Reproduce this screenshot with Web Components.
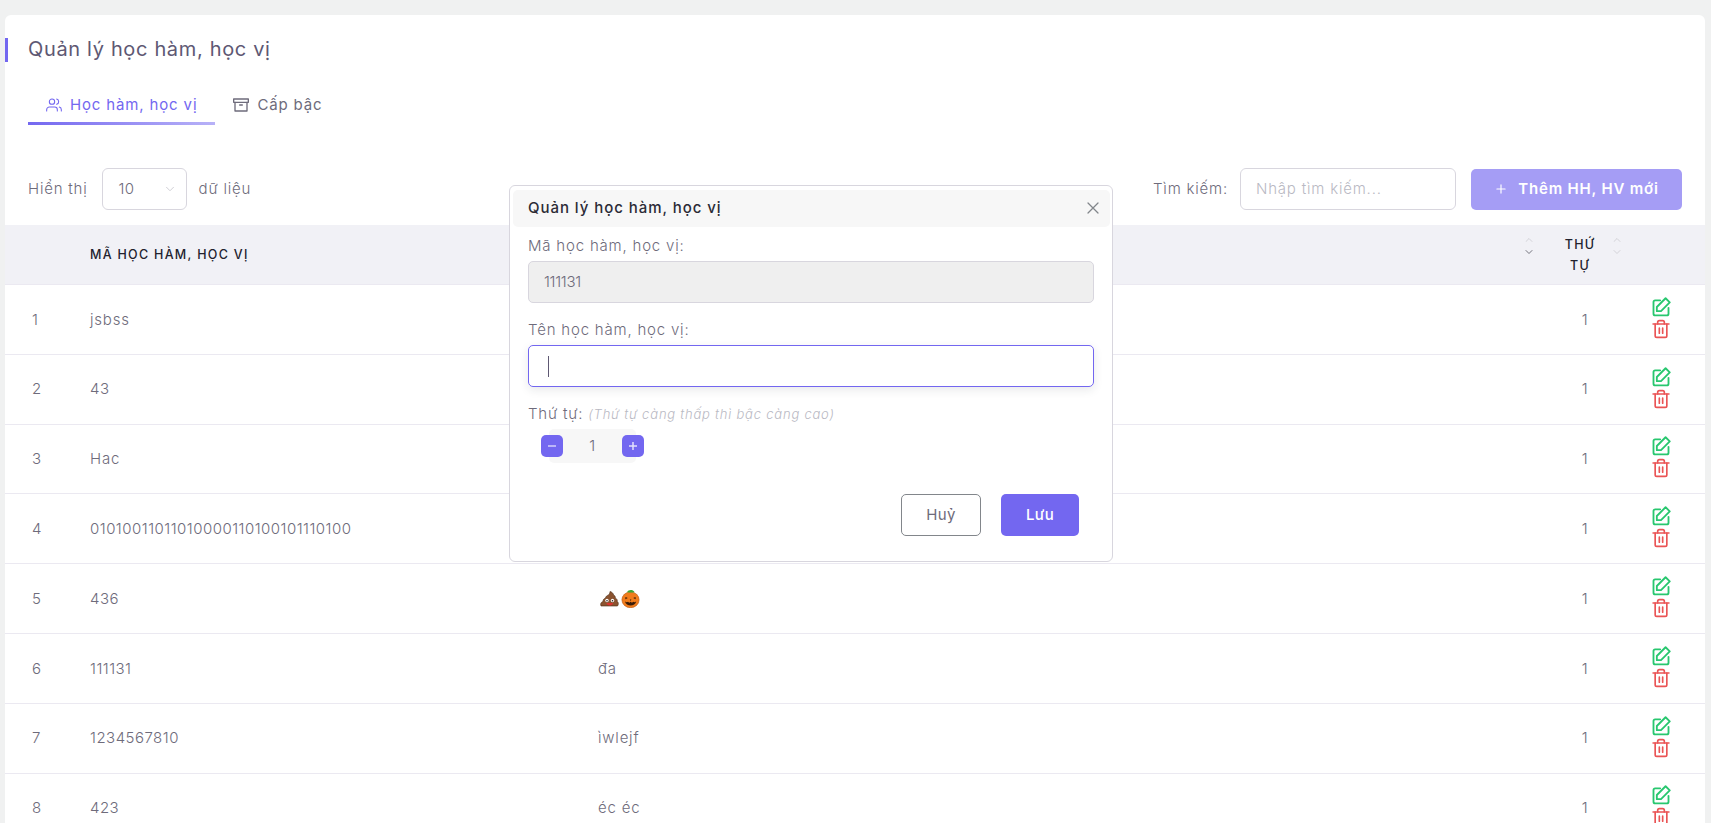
<!DOCTYPE html>
<html lang="vi">
<head>
<meta charset="utf-8">
<title>Quản lý học hàm, học vị</title>
<style>
  html, body { margin: 0; height: 100%; }
  body {
    background: #f0f1f1;
    color: #6e6b7b;
    font: 300 15px/1.45 Inter, "Noto Sans", sans-serif;
    letter-spacing: .8px;
    overflow: hidden;
  }
</style>
</head>
<body>
<degree-page>
  <degree-dialog slot="dialog"></degree-dialog>
</degree-page>

<script>
const icons = {
  users: '<path d="M17 21v-2a4 4 0 0 0-4-4H5a4 4 0 0 0-4 4v2"/><circle cx="9" cy="7" r="4"/><path d="M23 21v-2a4 4 0 0 0-3-3.87"/><path d="M16 3.13a4 4 0 0 1 0 7.75"/>',
  archive: '<path d="M21 8v13H3V8"/><path d="M1 3h22v5H1z"/><path d="M10 12h4"/>',
  plus: '<path d="M12 5v14M5 12h14"/>',
  x: '<path d="M18 6 6 18M6 6l12 12"/>',
  chevron: '<path d="m6 9 6 6 6-6"/>',
  edit: '<path d="M11 4H5a2 2 0 0 0-2 2v14a2 2 0 0 0 2 2h14a2 2 0 0 0 2-2v-7"/><path d="m17.500 1.500 5 5L12 17H7v-5z"/>',
  trash: '<path d="M2.500 6h19"/><path d="M8 6V4a2 2 0 0 1 2-2h4a2 2 0 0 1 2 2v2"/><path d="M19 6v14a2 2 0 0 1-2 2H7a2 2 0 0 1-2-2V6"/><path d="M10 11v6M14 11v6"/>'
}

const svg = (name, size, color, width = 2) =>
  `<svg width="${size}" height="${size}" viewBox="0 0 24 24" fill="none" stroke="${color}" stroke-width="${width}" stroke-linecap="round" stroke-linejoin="round" style="display:block;flex:none">${icons[name]}</svg>`

const emoji = `
  <svg width="42" height="19" viewBox="0 0 42 19" style="display:block;margin-left:2px">
    <path d="M1 17c-1-2 0-4 2-4.500 0-2 1-3 2.500-3.200C5.500 7.500 7 6.500 8.500 6c1-1 1.500-2.500 1.500-3.500 2 .5 3.500 2 3.500 3.500 1.500.5 2 2 1.800 3.200 1.500.3 2.200 1.800 2 3.300 1.200.7 1.500 3 .2 4.500z" fill="#8a5330" stroke="#4a2a14" stroke-width=".6"/>
    <circle cx="7" cy="11.500" r="1.700" fill="#fff"/><circle cx="12.500" cy="11.500" r="1.700" fill="#fff"/>
    <circle cx="7" cy="11.700" r=".8" fill="#222"/><circle cx="12.500" cy="11.700" r=".8" fill="#222"/>
    <path d="M6.500 14h6.500c0 1.500-1.500 2.500-3.200 2.500S6.500 15.500 6.500 14z" fill="#d9322e"/>
    <ellipse cx="30.500" cy="10.800" rx="8.600" ry="7.900" fill="#f07c1c" stroke="#b9560e" stroke-width=".6"/>
    <path d="M27 3.200c1-2 3-2.500 5.500-2 1 .5 1.500 1 2 2-2 .5-5 .5-7.500 0z" fill="#3fa535"/>
    <path d="m25.500 8 2.300 1-2.500 1.200zM35.500 8l-2.300 1 2.500 1.200zM29.800 10.500h1.600l-.8 1.500z" fill="#3a1c08"/>
    <path d="M25 12.500c1.500 1 2.200 1 3 .3l1.300 1 1.300-1 1.400 1 1.200-1c1 .7 1.500.7 3-.3-.5 2.800-3 4-5.600 4s-5.100-1.200-5.600-4z" fill="#3a1c08"/>
  </svg>`

const rows = [
  ['1', 'jsbss', '', '1'],
  ['2', '43', '', '1'],
  ['3', 'Hac', '', '1'],
  ['4', '01010011011010000110100101110100', '', '1'],
  ['5', '436', emoji, '1'],
  ['6', '111131', 'đa', '1'],
  ['7', '1234567810', 'ìwlejf', '1'],
  ['8', '423', 'éc éc', '1']
]

class SortIcon extends HTMLElement {
  constructor() {
    super()
    const down = this.getAttribute('color') || '#c9c8cf'
    this.attachShadow({ mode: 'open' }).innerHTML = `
      <style>
        :host { display: block; width: 12px; flex: none; margin-top: -17px; }
        .up { transform: rotate(180deg); margin-bottom: 0; }
      </style>
      <div class="up">${svg('chevron', 12, '#c9c8cf', 1.5)}</div>
      <div>${svg('chevron', 12, down, 1.5)}</div>`
  }
}
customElements.define('sort-icon', SortIcon)

const tableColumns = 'grid-template-columns: 85px 508px 1fr 110px 65px;'

class DataTable extends HTMLElement {
  constructor() {
    super()
    const body = rows.map(r => `
      <div class="row">
        <div class="cell idx num">${r[0]}</div>
        <div class="cell ${/^\d+$/.test(r[1]) ? 'num' : ''}">${r[1]}</div>
        <div class="cell">${r[2]}</div>
        <div class="cell center num">${r[3]}</div>
        <div class="cell actions">${svg('edit', 20, '#28c76f', 2.2)}${svg('trash', 20, '#ea5455', 2)}</div>
      </div>`).join('')
    this.attachShadow({ mode: 'open' }).innerHTML = `
      <style>
        :host { display: block; }
        .head, .row { display: grid; ${tableColumns} }
        .head {
          height: 60px;
          background: #f1f1f6;
          border-bottom: 1px solid #ebe9f1;
          box-sizing: border-box;
          color: #22222e;
          font-size: 12.5px;
          font-weight: 500;
          line-height: 21px;
          letter-spacing: 1.3px;
          text-transform: uppercase;
          align-items: center;
        }
        .head .name-sort { display: flex; justify-content: flex-end; margin-right: -5px; }
        .head .order { display: flex; align-items: center; padding-left: 30px; gap: 11px; }
        .head .order span { width: 40px; text-align: center; }
        .row { height: 69.8px; box-sizing: border-box; border-bottom: 1px solid #ebe9f1; }
        .cell { display: flex; align-items: center; min-width: 0; }
        .num { letter-spacing: .48px; }
        .idx { padding-left: 27px; }
        .center { justify-content: center; }
        .actions { flex-direction: column; align-items: flex-start; justify-content: center; gap: 2px; padding: 0 0 3px 11px; }
      </style>
      <div class="head">
        <div></div>
        <div>Mã học hàm, học vị</div>
        <div class="name-sort"><sort-icon color="#4b4b57"></sort-icon></div>
        <div class="order"><span>Thứ tự</span><sort-icon></sort-icon></div>
        <div></div>
      </div>
      ${body}`
  }
}
customElements.define('data-table', DataTable)

class TabBar extends HTMLElement {
  constructor() {
    super()
    this.attachShadow({ mode: 'open' }).innerHTML = `
      <style>
        :host { display: flex; padding-left: 23px; height: 52px; box-sizing: border-box; letter-spacing: .85px; }
        .tab { display: flex; align-items: center; gap: 8px; padding: 12px 18px 0; position: relative; font-size: 15px; font-weight: 400; }
        .tab.active { color: #7367f0; }
        .tab.active::after {
          content: '';
          position: absolute;
          left: 0; right: 0; bottom: 0;
          height: 3px;
          background: linear-gradient(30deg, #7367f0, rgba(115, 103, 240, .5));
        }
      </style>
      <div class="tab active">${svg('users', 16, '#7367f0', 1.6)}<span>Học hàm, học vị</span></div>
      <div class="tab">${svg('archive', 16, '#6e6b7b', 2)}<span>Cấp bậc</span></div>`
  }
}
customElements.define('tab-bar', TabBar)

class TableToolbar extends HTMLElement {
  constructor() {
    super()
    this.attachShadow({ mode: 'open' }).innerHTML = `
      <style>
        :host { display: flex; align-items: center; justify-content: space-between; padding: 0 23px 0 23px; height: 42px; }
        .side { display: flex; align-items: center; }
        .select {
          width: 85px; height: 42px; box-sizing: border-box; margin: 0 12px 0 14px;
          border: 1px solid #d8d6de; border-radius: 6px;
          display: flex; align-items: center; justify-content: space-between;
          padding: 0 9px 0 16px;
          letter-spacing: .35px;
        }
        .search {
          width: 216px; height: 42px; box-sizing: border-box; margin: 0 15px 0 12px;
          border: 1px solid #d8d6de; border-radius: 6px;
          display: flex; align-items: center; padding-left: 15px; color: #b9b9c3;
        }
        .add {
          width: 211px; height: 41px; border-radius: 5px;
          background: #a59df5; color: #fff; font-weight: 600;
          display: flex; align-items: center; justify-content: center; gap: 10px;
        }
      </style>
      <div class="side">
        <span>Hiển thị</span>
        <div class="select"><span>10</span>${svg('chevron', 14, '#c9c8cf', 1.5)}</div>
        <span>dữ liệu</span>
      </div>
      <div class="side">
        <span>Tìm kiếm:</span>
        <div class="search">Nhập tìm kiếm...</div>
        <div class="add">${svg('plus', 14, '#fff', 2)}<span>Thêm HH, HV mới</span></div>
      </div>`
  }
}
customElements.define('table-toolbar', TableToolbar)

class DegreeDialog extends HTMLElement {
  constructor() {
    super()
    this.attachShadow({ mode: 'open' }).innerHTML = `
      <style>
        :host {
          position: absolute; left: 504px; top: 170px;
          width: 604px; height: 377px; box-sizing: border-box;
          background: #fff; border: 1px solid #d8d6de; border-radius: 6px;
          padding: 4px 2px 4px 3px;
        }
        .title {
          height: 37px; background: #f7f7f7; border-radius: 5px; box-sizing: border-box;
          display: flex; align-items: center; justify-content: space-between;
          padding: 0 7px 2px 15px;
          color: #2b2b36; font-weight: 500; font-size: 15px; letter-spacing: .95px;
        }
        .body { padding: 8px 16px 0 15px; }
        label { display: block; height: 26px; line-height: 22px; }
        .input {
          height: 42px; box-sizing: border-box; border: 1px solid #d8d6de; border-radius: 5px;
          display: flex; align-items: center; padding-left: 15px; margin-bottom: 16px;
          letter-spacing: -.3px;
        }
        .input.off { background: #efefef; }
        .input.on { border-color: #7367f0; box-shadow: 0 3px 10px 0 rgba(34, 41, 47, .1); padding-left: 19px; }
        .caret { width: 1px; height: 21px; background: #5e5873; }
        label.order { margin-top: 7px; height: 26px; }
        em { color: #b9b9c3; font-size: 13px; letter-spacing: .77px; }
        .stepper { display: flex; width: 103px; height: 34px; margin-left: 13px; position: relative; align-items: center; justify-content: space-between; }
        .stepper::before { content: ''; position: absolute; left: 8px; right: 8px; top: 0; bottom: 0; background: #f7f7f7; border-radius: 5px; }
        .step {
          position: relative; width: 22px; height: 22px; border-radius: 5px; background: #7367f0;
          display: flex; align-items: center; justify-content: center;
        }
        .value { position: relative; }
        .foot { display: flex; justify-content: flex-end; gap: 20px; margin-top: 31px; padding-right: 15px; }
        .btn {
          height: 42px; box-sizing: border-box; border-radius: 5px;
          display: flex; align-items: center; justify-content: center; font-weight: 400; letter-spacing: .4px;
        }
        .cancel { width: 80px; border: 1px solid #82868b; }
        .save { width: 78px; background: #7367f0; color: #fff; font-weight: 500; }
      </style>
      <div class="title"><span>Quản lý học hàm, học vị</span>${svg('x', 20, '#82868b', 1.5)}</div>
      <div class="body">
        <label>Mã học hàm, học vị:</label>
        <div class="input off">111131</div>
        <label>Tên học hàm, học vị:</label>
        <div class="input on"><span class="caret"></span></div>
        <label class="order">Thứ tự: <em>(Thứ tự càng thấp thì bậc càng cao)</em></label>
        <div class="stepper">
          <div class="step"><svg width="10" height="10" viewBox="0 0 10 10"><path d="M1 5h8" stroke="#d5d1fb" stroke-width="1.500"/></svg></div>
          <span class="value">1</span>
          <div class="step"><svg width="10" height="10" viewBox="0 0 10 10"><path d="M1 5h8M5 1v8" stroke="#e3e1fc" stroke-width="1.500"/></svg></div>
        </div>
        <div class="foot">
          <div class="btn cancel">Huỷ</div>
          <div class="btn save">Lưu</div>
        </div>
      </div>`
  }
}
customElements.define('degree-dialog', DegreeDialog)

class DegreePage extends HTMLElement {
  constructor() {
    super()
    this.attachShadow({ mode: 'open' }).innerHTML = `
      <style>
        :host { display: block; padding: 15px 6px 0 5px; height: 100vh; box-sizing: border-box; }
        .card { position: relative; background: #fff; border-radius: 6px 6px 0 0; height: 100%; overflow: hidden; padding-top: 23px; box-sizing: border-box; }
        h1 {
          margin: 0; height: 24px; padding-left: 20px; box-sizing: content-box;
          border-left: 3px solid #7367f0;
          font-size: 20px; font-weight: 400; line-height: 22px; letter-spacing: .66px; color: #5e5873;
        }
        tab-bar { margin-top: 11px; }
        table-toolbar { margin: 43px 0 15px; }
      </style>
      <div class="card">
        <h1>Quản lý học hàm, học vị</h1>
        <tab-bar></tab-bar>
        <table-toolbar></table-toolbar>
        <data-table></data-table>
        <slot name="dialog"></slot>
      </div>`
  }
}
customElements.define('degree-page', DegreePage)
</script>
</body>
</html>
